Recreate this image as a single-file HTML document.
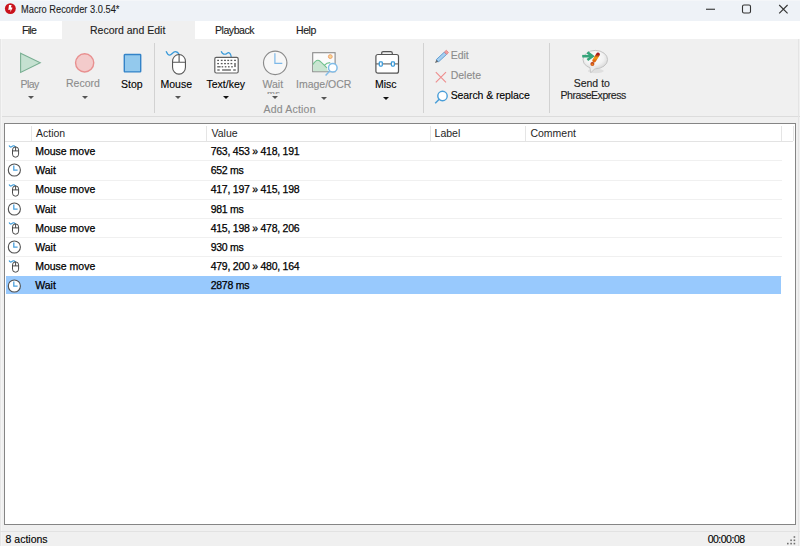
<!DOCTYPE html>
<html><head><meta charset="utf-8">
<style>
*{margin:0;padding:0;box-sizing:border-box}
html,body{width:800px;height:546px;overflow:hidden;background:#f0f0f0;font-family:"Liberation Sans",sans-serif;color:#000}
.a{-webkit-text-stroke:0.12px currentColor}
.r{-webkit-text-stroke:0.25px currentColor}
.h{color:#262626;-webkit-text-stroke:0}
.a{position:absolute;white-space:nowrap;font-size:10.5px;line-height:12px}
.g{color:#8c8c8c}
#title{position:absolute;left:0;top:0;width:800px;height:21px;background:#eef2f7;border-top:1px solid #f4f6f9}
#menu{position:absolute;left:0;top:21px;width:800px;height:18px;background:#fff}
#tabsel{position:absolute;left:62px;top:21px;width:133px;height:18px;background:#f0f0f0}
.sep{position:absolute;top:43px;width:1px;height:70px;background:#d2d2d2}
.arr{position:absolute;width:0;height:0;border-left:3px solid transparent;border-right:3px solid transparent;border-top:3px solid #444}
#list{position:absolute;left:4px;top:123px;width:792px;height:402px;background:#fff;border:1px solid #858585}
.hd{position:absolute;top:2px;width:1px;height:15px;background:#e5e5e5}
.ic{position:absolute}
.rl{position:absolute;left:1px;width:776px;height:1px;background:#f0f0f0}
</style></head><body>
<div id="title"></div>
<svg style="position:absolute;left:4px;top:3px" width="12" height="12" viewBox="0 0 12 12"><circle cx="6.35" cy="5.6" r="5.45" fill="#c9121d"/><path d="M5 2.1 L7.6 2.1 L6.9 4.3 L8.6 4.7 L6.3 9.3 L6.6 6.6 L4.3 6.9 Z" fill="#fff"/></svg>
<div class="a" style="left:21px;top:4.2px;font-size:10.2px;color:#1c1c1c;-webkit-text-stroke:0.1px #1c1c1c;transform:scaleX(0.91);transform-origin:0 0">Macro Recorder 3.0.54*</div>
<svg style="position:absolute;left:706px;top:8px" width="10" height="2"><rect x="0" y="0.7" width="9" height="1.1" fill="#333"/></svg>
<svg style="position:absolute;left:741px;top:4px" width="11" height="11"><rect x="1.5" y="1" width="8" height="8" rx="1.5" fill="none" stroke="#333" stroke-width="1.1"/></svg>
<svg style="position:absolute;left:778px;top:4px" width="11" height="11"><path d="M1.2 1 L9.6 9.4 M9.6 1 L1.2 9.4" stroke="#333" stroke-width="1.1"/></svg>

<div id="menu"></div>
<div id="tabsel"></div>
<div class="a" style="left:22px;top:23.5px;letter-spacing:-0.7px;color:#222">File</div>
<div class="a" style="left:90px;top:23.5px;color:#222">Record and Edit</div>
<div class="a" style="left:215px;top:23.5px;letter-spacing:-0.45px;color:#222">Playback</div>
<div class="a" style="left:296px;top:23.5px;letter-spacing:-0.45px;color:#222">Help</div>

<!-- ribbon -->
<svg style="position:absolute;left:19px;top:52px" width="24" height="23"><path d="M1.6 1.2 L21.3 10.8 L1.6 20.5 Z" fill="#c5e1d1" stroke="#78ae92" stroke-width="1.05"/></svg>
<div class="a g" style="left:20.5px;top:77.8px;letter-spacing:-0.6px">Play</div>
<div class="arr" style="left:27.5px;top:95.5px;border-top-color:#555"></div>

<svg style="position:absolute;left:73px;top:52px" width="23" height="23"><circle cx="11.65" cy="10.85" r="9.1" fill="#f3cbcb" stroke="#e89090" stroke-width="1.4"/></svg>
<div class="a g" style="left:66px;top:77.2px">Record</div>
<div class="arr" style="left:81.5px;top:95.5px;border-top-color:#555"></div>

<svg style="position:absolute;left:122px;top:53px" width="21" height="20"><rect x="2.3" y="1.5" width="16.4" height="17.4" rx="0.6" fill="#93c9ed" stroke="#3383c8" stroke-width="1.4"/></svg>
<div class="a" style="left:121px;top:77.8px">Stop</div>

<div class="sep" style="left:154px"></div>

<!-- mouse -->
<svg style="position:absolute;left:164px;top:49px" width="26" height="28"><path d="M2.1 2.3 C3 4.5,4.5 6.2,5.8 6.1 C7.6 6,9 2.6,11.2 2.6 C13 2.6,14.5 4,15.2 5.6" fill="none" stroke="#3a9ad9" stroke-width="1.3"/><rect x="8.55" y="5.45" width="12.9" height="19.7" rx="6.45" ry="7" fill="#fff" stroke="#555" stroke-width="1.1"/><path d="M15.1 5.6 V13.3 M8.55 13.3 H21.45" stroke="#555" stroke-width="1.1"/></svg>
<div class="a" style="left:160.5px;top:77.8px">Mouse</div>
<div class="arr" style="left:175px;top:95.5px;border-top-color:#555"></div>

<!-- keyboard -->
<svg style="position:absolute;left:212px;top:49px" width="29" height="26"><path d="M9.2 2.3 C9.8 4,11.5 5.5,13.6 5.2 C15 5,15.5 3.5,16.5 3.7 C18 4,19 6,19.2 8.2" fill="none" stroke="#3a9ad9" stroke-width="1.2"/><rect x="2.8" y="8.4" width="23.4" height="15.6" rx="1.5" fill="#fff" stroke="#606060" stroke-width="1.2"/><g fill="#5a5a5a"><rect x="5.20" y="10.75" width="1.8" height="1.3"/><rect x="8.80" y="10.75" width="1.8" height="1.3"/><rect x="12.10" y="10.75" width="1.8" height="1.3"/><rect x="15.30" y="10.75" width="1.8" height="1.3"/><rect x="18.50" y="10.75" width="1.8" height="1.3"/><rect x="22.10" y="10.75" width="1.8" height="1.3"/><rect x="5.20" y="13.95" width="1.8" height="1.3"/><rect x="8.80" y="13.95" width="1.8" height="1.3"/><rect x="12.10" y="13.95" width="1.8" height="1.3"/><rect x="15.30" y="13.95" width="1.8" height="1.3"/><rect x="18.50" y="13.95" width="1.8" height="1.3"/><rect x="22.3" y="13.95" width="1.4" height="4.1"/><rect x="5.2" y="17.15" width="3.4" height="1.3"/><rect x="9.60" y="17.15" width="1.6" height="1.3"/><rect x="12.80" y="17.15" width="1.6" height="1.3"/><rect x="16.00" y="17.15" width="1.6" height="1.3"/><rect x="19.20" y="17.15" width="1.6" height="1.3"/><rect x="5.3" y="20.35" width="2.4" height="1.3"/><rect x="10.1" y="20.35" width="8.8" height="1.3"/><rect x="21.2" y="20.35" width="2.6" height="1.3"/></g></svg>
<div class="a" style="left:206.5px;top:77.8px">Text/key</div>
<div class="arr" style="left:223px;top:95.5px;border-top-color:#111"></div>

<!-- wait -->
<svg style="position:absolute;left:262px;top:50px" width="27" height="27"><circle cx="13.2" cy="12.85" r="11.7" fill="#f7f7f7" stroke="#8a8a8a" stroke-width="1.15"/><path d="M12.9 3.3 V13.3 H20.3" fill="none" stroke="#7db8e8" stroke-width="1.2"/></svg>
<div class="a g" style="left:262.5px;top:77.8px">Wait</div>
<div class="a g" style="left:267px;top:87.5px;height:6px;overflow:hidden;font-size:9.5px;letter-spacing:0.3px">ms</div>
<div class="arr" style="left:272px;top:95.5px;border-top-color:#555"></div>

<!-- image/ocr -->
<svg style="position:absolute;left:310px;top:50px" width="30" height="28"><rect x="2.7" y="2.7" width="22.4" height="19" fill="#fbfbfb" stroke="#8a8a8a" stroke-width="1.1"/><path d="M3.2 21.2 V14.5 C5 11,7 9.5,9 10.5 C11.5 12,14 15,16.8 17.8 L18 21.2 Z" fill="#c9e5d1"/><path d="M3 14.5 C5 11,7 9.5,9 10.5 C11.5 12,14 15,16.8 17.8 M14.6 15.2 C16 13.4,18 12.6,20.2 12.6" fill="none" stroke="#6fc08c" stroke-width="1.1"/><circle cx="20.3" cy="6.6" r="1.9" fill="#f8d890" stroke="#eea070" stroke-width="1"/><circle cx="22.8" cy="17.8" r="4.3" fill="#fff" stroke="#80bce8" stroke-width="1.5"/><path d="M19.7 21 L15.6 25.5" stroke="#80bce8" stroke-width="1.4"/></svg>
<div class="a g" style="left:296px;top:77.8px">Image/OCR</div>
<div class="arr" style="left:321px;top:97px;border-top-color:#555"></div>

<!-- misc -->
<svg style="position:absolute;left:373px;top:49px" width="28" height="27"><path d="M8.7 5.5 V4.2 C8.7 3.2,9.2 2.6,10.2 2.6 H17.8 C18.8 2.6,19.3 3.2,19.3 4.2 V5.5" fill="none" stroke="#555" stroke-width="1.2"/><rect x="2.9" y="5.5" width="22.6" h="19" height="18.7" rx="2" fill="#fff" stroke="#555" stroke-width="1.2"/><path d="M2.9 14.9 H25.5" stroke="#6a6a6a" stroke-width="1.2"/><rect x="6.3" y="12.75" width="3" height="4.4" rx="0.8" fill="#fff" stroke="#3a9ad9" stroke-width="1.25"/><rect x="18.4" y="12.75" width="3" height="4.4" rx="0.8" fill="#fff" stroke="#3a9ad9" stroke-width="1.25"/></svg>
<div class="a" style="left:375px;top:77.8px">Misc</div>
<div class="arr" style="left:383px;top:97px;border-top-color:#111"></div>

<div class="a g" style="left:263.5px;top:103.3px;letter-spacing:0.2px">Add Action</div>

<div class="sep" style="left:423px"></div>

<!-- edit/delete/search -->
<svg style="position:absolute;left:433px;top:49px" width="16" height="16"><g transform="translate(2,14) rotate(-43)"><path d="M0 0 L3.4 -1.6 L3.4 1.6Z" fill="#6a6a6a"/><rect x="3.4" y="-1.6" width="11" height="3.2" fill="#a6cff0" stroke="#4a8fcc" stroke-width="0.75"/><rect x="14.4" y="-1.6" width="2.6" height="3.2" fill="#f0a0a0" stroke="#e07070" stroke-width="0.6"/></g></svg>
<div class="a g" style="left:450.7px;top:49.4px">Edit</div>
<svg style="position:absolute;left:434px;top:71px" width="14" height="13"><path d="M1.8 1.2 L12 11.3 M12 1.2 L1.8 11.3" stroke="#ee8e8e" stroke-width="1.15"/></svg>
<div class="a g" style="left:450.7px;top:69.4px">Delete</div>
<svg style="position:absolute;left:434px;top:89px" width="15" height="16"><circle cx="8.5" cy="7" r="4.7" fill="#fff" stroke="#4a9ed8" stroke-width="1.4"/><path d="M5.2 10.3 L1.2 14.3" stroke="#4a9ed8" stroke-width="1.5"/></svg>
<div class="a" style="left:450.7px;top:89.2px;letter-spacing:-0.1px">Search &amp; replace</div>

<div class="sep" style="left:549px"></div>

<!-- phraseexpress -->
<svg style="position:absolute;left:578px;top:46px" width="34" height="30"><defs><radialGradient id="bg1" cx="0.45" cy="0.4" r="0.65"><stop offset="0" stop-color="#ffffff"/><stop offset="0.6" stop-color="#f2f2f2"/><stop offset="1" stop-color="#d4d4d4"/></radialGradient><linearGradient id="ex1" x1="0" y1="0" x2="0" y2="1"><stop offset="0" stop-color="#a81818"/><stop offset="0.55" stop-color="#f2a012"/><stop offset="1" stop-color="#e06a10"/></linearGradient><radialGradient id="dt1" cx="0.5" cy="0.6" r="0.6"><stop offset="0" stop-color="#f08a20"/><stop offset="1" stop-color="#b02a10"/></radialGradient></defs><ellipse cx="17.8" cy="25" rx="8" ry="2.2" fill="#000" opacity="0.07"/><ellipse cx="17.3" cy="13.6" rx="12.3" ry="9.2" fill="url(#bg1)" stroke="#c0c0c0" stroke-width="0.9"/><path d="M11.8 21 L12.8 26.8 L17.5 22" fill="#ececec" stroke="#c0c0c0" stroke-width="0.8"/><path d="M12 20.6 L17.5 21.8" stroke="#ececec" stroke-width="1.2"/><path d="M4.2 10.2 H13.5" stroke="#36a47a" stroke-width="2.6"/><path d="M9.4 6.4 L14.6 10.2 L9.4 14" fill="none" stroke="#36a47a" stroke-width="2.6"/><path d="M20 8.4 L16.2 14.6" stroke="url(#ex1)" stroke-width="3.8" stroke-linecap="round"/><circle cx="14.4" cy="18.1" r="2" fill="url(#dt1)"/></svg>
<div class="a" style="left:573.7px;top:76.6px;color:#222">Send to</div>
<div class="a" style="left:560.5px;top:89px;letter-spacing:-0.45px;color:#222">PhraseExpress</div>

<div style="position:absolute;left:0;top:116px;width:800px;height:1px;background:#dcdcdc"></div>

<!-- list -->
<div id="list">
<div style="position:absolute;left:0;top:17px;width:788px;height:1px;background:#e3e3e3"></div>
<div class="hd" style="left:25.5px"></div>
<div class="hd" style="left:201.2px"></div>
<div class="hd" style="left:424.7px"></div>
<div class="hd" style="left:520.4px"></div>
<div class="hd" style="left:775.6px"></div>
<div class="hd" style="left:788.2px"></div>
<div class="a h" style="left:31px;top:3px">Action</div>
<div class="a h" style="left:206.5px;top:3px">Value</div>
<div class="a h" style="left:429.6px;top:3px">Label</div>
<div class="a h" style="left:525.4px;top:3px">Comment</div>
<div class="rl" style="top:36.4px"></div>
<svg class="ic" style="left:0;top:17.2px" width="18" height="19"><path d="M4.1 4.5 C4.8 5.8,5.5 6.4,6.5 5.8 C7.5 5,8.2 4.4,9.2 4.9 C10 5.4,10.4 5.8,10.6 6.2" fill="none" stroke="#3a9ad9" stroke-width="1.2"/><rect x="7.5" y="5.9" width="6.1" height="10.3" rx="3.05" fill="#fff" stroke="#4a4a4a" stroke-width="1"/><path d="M10.6 5.9 V9.9 M7.5 9.9 H13.6" stroke="#4a4a4a" stroke-width="1"/></svg>
<div class="a r" style="left:30.2px;top:21.0px">Mouse move</div>
<div class="a r" style="left:205.7px;top:21.0px;letter-spacing:-0.25px">763, 453 » 418, 191</div>
<div class="rl" style="top:55.6px"></div>
<svg class="ic" style="left:0;top:36.4px" width="18" height="19"><circle cx="9.35" cy="10" r="6.05" fill="#fff" stroke="#505050" stroke-width="1.1"/><path d="M8.8 5.6 V10.1 H12.6" fill="none" stroke="#4aa0dc" stroke-width="1.3"/></svg>
<div class="a r" style="left:30.2px;top:40.2px">Wait</div>
<div class="a r" style="left:205.7px;top:40.2px;letter-spacing:-0.25px">652 ms</div>
<div class="rl" style="top:74.8px"></div>
<svg class="ic" style="left:0;top:55.6px" width="18" height="19"><path d="M4.1 4.5 C4.8 5.8,5.5 6.4,6.5 5.8 C7.5 5,8.2 4.4,9.2 4.9 C10 5.4,10.4 5.8,10.6 6.2" fill="none" stroke="#3a9ad9" stroke-width="1.2"/><rect x="7.5" y="5.9" width="6.1" height="10.3" rx="3.05" fill="#fff" stroke="#4a4a4a" stroke-width="1"/><path d="M10.6 5.9 V9.9 M7.5 9.9 H13.6" stroke="#4a4a4a" stroke-width="1"/></svg>
<div class="a r" style="left:30.2px;top:59.4px">Mouse move</div>
<div class="a r" style="left:205.7px;top:59.4px;letter-spacing:-0.25px">417, 197 » 415, 198</div>
<div class="rl" style="top:94.0px"></div>
<svg class="ic" style="left:0;top:74.8px" width="18" height="19"><circle cx="9.35" cy="10" r="6.05" fill="#fff" stroke="#505050" stroke-width="1.1"/><path d="M8.8 5.6 V10.1 H12.6" fill="none" stroke="#4aa0dc" stroke-width="1.3"/></svg>
<div class="a r" style="left:30.2px;top:78.6px">Wait</div>
<div class="a r" style="left:205.7px;top:78.6px;letter-spacing:-0.25px">981 ms</div>
<div class="rl" style="top:113.2px"></div>
<svg class="ic" style="left:0;top:94.0px" width="18" height="19"><path d="M4.1 4.5 C4.8 5.8,5.5 6.4,6.5 5.8 C7.5 5,8.2 4.4,9.2 4.9 C10 5.4,10.4 5.8,10.6 6.2" fill="none" stroke="#3a9ad9" stroke-width="1.2"/><rect x="7.5" y="5.9" width="6.1" height="10.3" rx="3.05" fill="#fff" stroke="#4a4a4a" stroke-width="1"/><path d="M10.6 5.9 V9.9 M7.5 9.9 H13.6" stroke="#4a4a4a" stroke-width="1"/></svg>
<div class="a r" style="left:30.2px;top:97.8px">Mouse move</div>
<div class="a r" style="left:205.7px;top:97.8px;letter-spacing:-0.25px">415, 198 » 478, 206</div>
<div class="rl" style="top:132.4px"></div>
<svg class="ic" style="left:0;top:113.2px" width="18" height="19"><circle cx="9.35" cy="10" r="6.05" fill="#fff" stroke="#505050" stroke-width="1.1"/><path d="M8.8 5.6 V10.1 H12.6" fill="none" stroke="#4aa0dc" stroke-width="1.3"/></svg>
<div class="a r" style="left:30.2px;top:117.0px">Wait</div>
<div class="a r" style="left:205.7px;top:117.0px;letter-spacing:-0.25px">930 ms</div>
<div class="rl" style="top:151.6px"></div>
<svg class="ic" style="left:0;top:132.4px" width="18" height="19"><path d="M4.1 4.5 C4.8 5.8,5.5 6.4,6.5 5.8 C7.5 5,8.2 4.4,9.2 4.9 C10 5.4,10.4 5.8,10.6 6.2" fill="none" stroke="#3a9ad9" stroke-width="1.2"/><rect x="7.5" y="5.9" width="6.1" height="10.3" rx="3.05" fill="#fff" stroke="#4a4a4a" stroke-width="1"/><path d="M10.6 5.9 V9.9 M7.5 9.9 H13.6" stroke="#4a4a4a" stroke-width="1"/></svg>
<div class="a r" style="left:30.2px;top:136.2px">Mouse move</div>
<div class="a r" style="left:205.7px;top:136.2px;letter-spacing:-0.25px">479, 200 » 480, 164</div>
<div style="position:absolute;left:1px;top:152.2px;width:775px;height:18px;background:#98c9fd"></div>
<svg class="ic" style="left:0;top:151.6px" width="18" height="19"><circle cx="9.35" cy="10" r="6.05" fill="#fff" stroke="#505050" stroke-width="1.1"/><path d="M8.8 5.6 V10.1 H12.6" fill="none" stroke="#4aa0dc" stroke-width="1.3"/></svg>
<div class="a r" style="left:30.2px;top:155.4px">Wait</div>
<div class="a r" style="left:205.7px;top:155.4px;letter-spacing:-0.25px">2878 ms</div>

</div>

<!-- status -->
<div style="position:absolute;left:0;top:39px;width:1px;height:507px;background:#e6e6e6"></div><div style="position:absolute;left:1px;top:39px;width:1px;height:507px;background:#f5f5f5"></div>
<div style="position:absolute;left:798px;top:39px;width:1px;height:507px;background:#e4e4e4"></div>
<svg style="position:absolute;left:786px;top:535px" width="12" height="11"><g fill="#707070"><rect x="7.60" y="1.20" width="1.6" height="1.6"/><rect x="4.30" y="4.50" width="1.6" height="1.6"/><rect x="7.60" y="4.50" width="1.6" height="1.6"/><rect x="1.00" y="7.80" width="1.6" height="1.6"/><rect x="4.30" y="7.80" width="1.6" height="1.6"/><rect x="7.60" y="7.80" width="1.6" height="1.6"/></g></svg>
<div style="position:absolute;left:0;top:531px;width:800px;height:1px;background:#e2e2e2"></div>
<div class="a" style="left:5.6px;top:533px">8 actions</div>
<div class="a" style="left:707.7px;top:533px;letter-spacing:-0.5px">00:00:08</div>
</body></html>
